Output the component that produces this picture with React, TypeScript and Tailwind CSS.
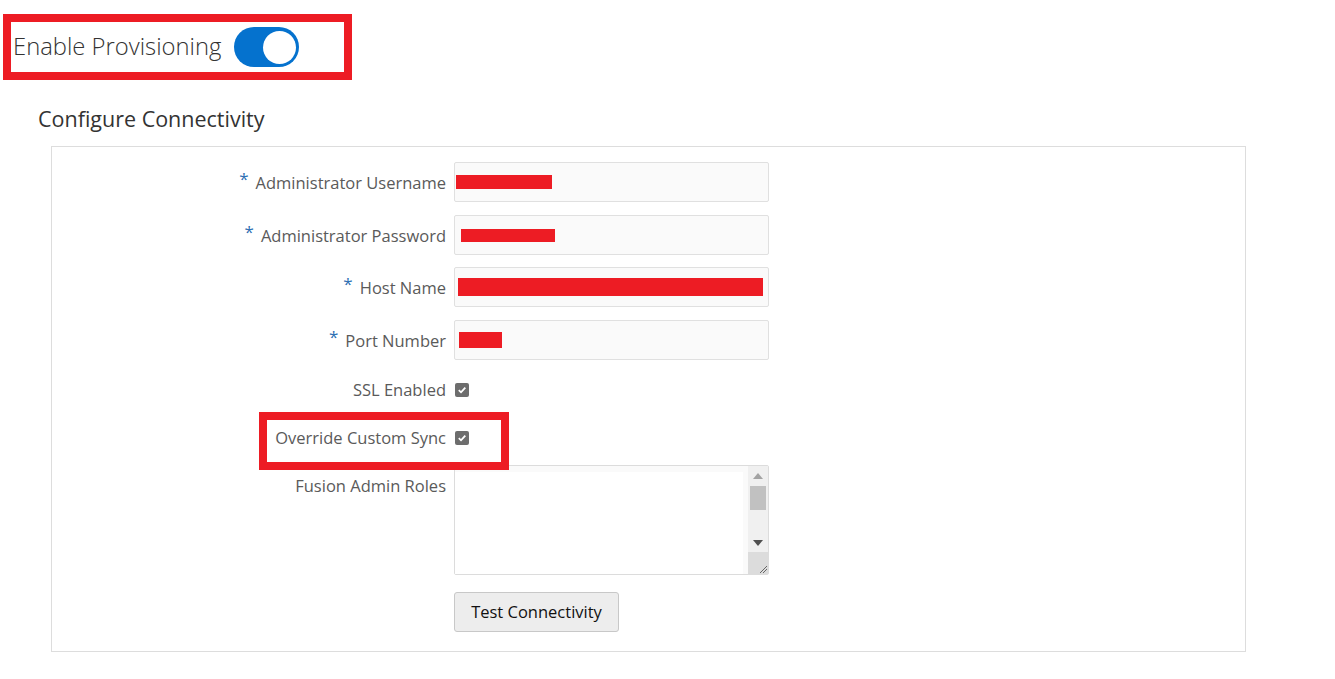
import React from 'react'

const Asterisk: React.FunctionComponent = () => <span className="mr-[7px] -mt-[10px] text-[17px] leading-none text-[#2f6fb3]">*</span>

const Redacted = ({ w, h, ml = 0 }: { w: number; h: number; ml?: number }) => (
  <div className="bg-[#ed1c24]" style={{ width: w, height: h, marginLeft: ml }} />
)

const CheckBox: React.FunctionComponent = () => (
  <div className="w-[14px] h-[14px] rounded-[2px] bg-[#6d6d6d] flex items-center justify-center">
    <svg width="10" height="10" viewBox="0 0 10 10">
      <path d="M1.8 5.2 L4 7.3 L8.3 2.6" stroke="#fff" strokeWidth="1.8" fill="none" />
    </svg>
  </div>
)

const App: React.FunctionComponent = () => {
  const fields = [
    { label: 'Administrator Username', bar: { w: 96, h: 14, ml: 1 }, mt: 'mt-0' },
    { label: 'Administrator Password', bar: { w: 94, h: 13, ml: 6 }, mt: 'mt-[13px]' },
    { label: 'Host Name', bar: { w: 305, h: 18, ml: 3 }, mt: 'mt-[12px]' },
    { label: 'Port Number', bar: { w: 43, h: 16, ml: 4 }, mt: 'mt-[13px]' },
  ]

  return (
    <main className="w-[1335px] h-[679px] bg-white font-['Open_Sans',sans-serif] overflow-hidden">
      <div className="pt-[14px] pl-[3px]">
        <div className="w-[349px] h-[66px] border-[8px] border-[#ed1c24] flex items-center">
          <span className="ml-[2px] text-[23.8px] font-light text-[#333]">Enable Provisioning</span>
          <div className="ml-[13px] w-[65px] h-[40px] rounded-full bg-[#0572ce] flex items-center justify-end pr-[3px]">
            <div className="w-[33px] h-[33px] rounded-full bg-white" />
          </div>
        </div>
      </div>

      <h2 className="ml-[38px] mt-[24px] text-[21.5px] text-[#333] leading-[30px]">Configure Connectivity</h2>

      <div className="ml-[51px] mt-[12px] w-[1195px] h-[506px] border border-[#ddd] pt-[15px]">
        {fields.map((f) => (
          <div key={f.label} className={`flex items-center ${f.mt}`}>
            <div className="w-[394px] flex items-center justify-end text-[16.5px] text-[#5a5a5a] pt-[3px]">
              <Asterisk />
              <span>{f.label}</span>
            </div>
            <div className="ml-[8px] w-[315px] h-[40px] bg-[#fafafa] border border-[#e0e0e0] rounded-[2px] flex items-center">
              <Redacted w={f.bar.w} h={f.bar.h} ml={f.bar.ml} />
            </div>
          </div>
        ))}

        <div className="flex items-center mt-[18px] h-[24px]">
          <div className="w-[394px] text-right text-[16.5px] text-[#5a5a5a]">SSL Enabled</div>
          <div className="ml-[9px]">
            <CheckBox />
          </div>
        </div>

        <div className="relative flex items-center mt-[24px] h-[24px]">
          <div className="w-[394px] text-right text-[16.5px] text-[#5a5a5a]">Override Custom Sync</div>
          <div className="ml-[9px]">
            <CheckBox />
          </div>
          <div className="absolute left-[207px] top-[-14px] w-[250px] h-[58px] border-[8px] border-[#ed1c24]" />
        </div>

        <div className="flex items-start mt-[15px]">
          <div className="w-[394px] text-right text-[16.5px] text-[#5a5a5a] pt-[9px]">Fusion Admin Roles</div>
          <div className="ml-[8px] w-[315px] h-[110px] border border-[#dcdcdc] rounded-[2px] bg-[#fafafa] flex">
            <div className="flex-1 mt-[6px] mr-[5px] bg-white" />
            <div className="w-[20px] flex flex-col bg-[#f0f0f0]">
              <div className="h-[20px] flex items-center justify-center">
                <svg width="10" height="6" viewBox="0 0 10 6">
                  <path d="M0 6 L5 0 L10 6 Z" fill="#a3a3a3" />
                </svg>
              </div>
              <div className="mx-[2px] h-[24px] bg-[#c1c1c1]" />
              <div className="flex-1 flex items-end justify-center pb-[6px]">
                <svg width="10" height="6" viewBox="0 0 10 6">
                  <path d="M0 0 L10 0 L5 6 Z" fill="#505050" />
                </svg>
              </div>
              <div className="h-[22px] bg-[#dcdcdc] flex items-end justify-end">
                <svg width="10" height="10" viewBox="0 0 10 10">
                  <path d="M2 9 L9 2 M5 9 L9 5" stroke="#666" strokeWidth="1" />
                </svg>
              </div>
            </div>
          </div>
        </div>

        <div className="ml-[402px] mt-[17px]">
          <button className="w-[165px] h-[40px] bg-[#ededed] border border-[#c8c8c8] rounded-[3px] text-[16.5px] text-[#111]">
            Test Connectivity
          </button>
        </div>
      </div>
    </main>
  )
}

export default App
